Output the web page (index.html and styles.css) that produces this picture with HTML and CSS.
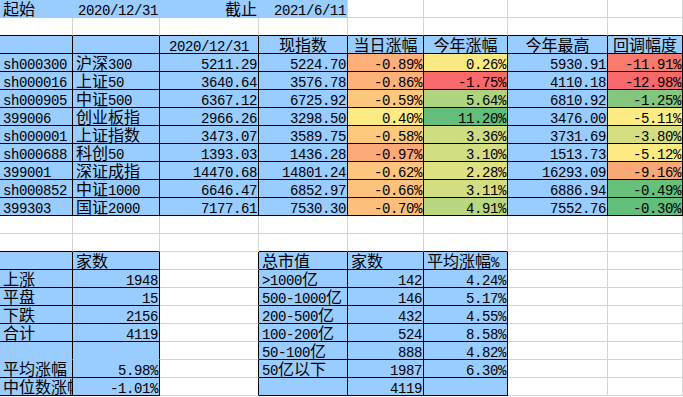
FILE: index.html
```html
<!DOCTYPE html>
<html lang="zh-CN">
<head>
<meta charset="utf-8">
<title>指数涨幅</title>
<link rel="stylesheet" href="styles.css">
</head>
<body>
<div class="sheet">
  <!-- row 1 -->
  <div class="c b x"><span class="h">起始</span></div>
  <div class="c b x r">2020/12/31</div>
  <div class="c b x r"><span class="h">截止</span></div>
  <div class="c b xb r">2021/6/11</div>
  <div class="c"></div><div class="c"></div><div class="c"></div><div class="c"></div>
  <!-- row 2 -->
  <div class="c kb"></div><div class="c kb"></div><div class="c kb"></div><div class="c kb"></div>
  <div class="c kb"></div><div class="c kb"></div><div class="c kb"></div><div class="c kb"></div>
  <!-- row 3 header -->
  <div class="c b k"></div>
  <div class="c b k"></div>
  <div class="c b k m">2020/12/31</div>
  <div class="c b k m"><span class="h">现指数</span></div>
  <div class="c b k m"><span class="h">当日涨幅</span></div>
  <div class="c b k m"><span class="h">今年涨幅</span></div>
  <div class="c b k m"><span class="h">今年最高</span></div>
  <div class="c b k m"><span class="h">回调幅度</span></div>
  <!-- data rows -->
  <div class="c b k">sh000300</div><div class="c b k"><span class="h">沪深</span>300</div>
  <div class="c b k r">5211.29</div><div class="c b k r">5224.70</div>
  <div class="c k r" style="background:#FCAF79">-0.89%</div>
  <div class="c k r" style="background:#F9E984">0.26%</div>
  <div class="c b k r">5930.91</div>
  <div class="c k r" style="background:#F97B6E">-11.91%</div>

  <div class="c b k">sh000016</div><div class="c b k"><span class="h">上证</span>50</div>
  <div class="c b k r">3640.64</div><div class="c b k r">3576.78</div>
  <div class="c k r" style="background:#FCB279">-0.86%</div>
  <div class="c k r" style="background:#F8696B">-1.75%</div>
  <div class="c b k r">4110.18</div>
  <div class="c k r" style="background:#F8696B">-12.98%</div>

  <div class="c b k">sh000905</div><div class="c b k"><span class="h">中证</span>500</div>
  <div class="c b k r">6367.12</div><div class="c b k r">6725.92</div>
  <div class="c k r" style="background:#FDC87D">-0.59%</div>
  <div class="c k r" style="background:#AFD47F">5.64%</div>
  <div class="c b k r">6810.92</div>
  <div class="c k r" style="background:#82C77D">-1.25%</div>

  <div class="c b k">399006</div><div class="c b k"><span class="h">创业板指</span></div>
  <div class="c b k r">2966.26</div><div class="c b k r">3298.50</div>
  <div class="c k r" style="background:#FCEA84">0.40%</div>
  <div class="c k r" style="background:#63BE7B">11.20%</div>
  <div class="c b k r">3476.00</div>
  <div class="c k r" style="background:#FFEB84">-5.11%</div>

  <div class="c b k">sh000001</div><div class="c b k"><span class="h">上证指数</span></div>
  <div class="c b k r">3473.07</div><div class="c b k r">3589.75</div>
  <div class="c k r" style="background:#FDC97D">-0.58%</div>
  <div class="c k r" style="background:#CFDD81">3.36%</div>
  <div class="c b k r">3731.69</div>
  <div class="c k r" style="background:#D5DF82">-3.80%</div>

  <div class="c b k">sh000688</div><div class="c b k"><span class="h">科创</span>50</div>
  <div class="c b k r">1393.03</div><div class="c b k r">1436.28</div>
  <div class="c k r" style="background:#FBA977">-0.97%</div>
  <div class="c k r" style="background:#D2DE81">3.10%</div>
  <div class="c b k r">1513.73</div>
  <div class="c k r" style="background:#FEEA84">-5.12%</div>

  <div class="c b k">399001</div><div class="c b k"><span class="h">深证成指</span></div>
  <div class="c b k r">14470.68</div><div class="c b k r">14801.24</div>
  <div class="c k r" style="background:#FDC57D">-0.62%</div>
  <div class="c k r" style="background:#DEE182">2.28%</div>
  <div class="c b k r">16293.09</div>
  <div class="c k r" style="background:#FBA877">-9.16%</div>

  <div class="c b k">sh000852</div><div class="c b k"><span class="h">中证</span>1000</div>
  <div class="c b k r">6646.47</div><div class="c b k r">6852.97</div>
  <div class="c k r" style="background:#FDC27C">-0.66%</div>
  <div class="c k r" style="background:#D2DE81">3.11%</div>
  <div class="c b k r">6886.94</div>
  <div class="c k r" style="background:#69C07B">-0.49%</div>

  <div class="c b k">399303</div><div class="c b k"><span class="h">国证</span>2000</div>
  <div class="c b k r">7177.61</div><div class="c b k r">7530.30</div>
  <div class="c k r" style="background:#FCBF7C">-0.70%</div>
  <div class="c k r" style="background:#B9D780">4.91%</div>
  <div class="c b k r">7552.76</div>
  <div class="c k r" style="background:#63BE7B">-0.30%</div>

  <!-- row 13 -->
  <div class="c"></div><div class="c"></div><div class="c"></div><div class="c"></div>
  <div class="c"></div><div class="c"></div><div class="c"></div><div class="c"></div>
  <!-- row 14 -->
  <div class="c kb"></div><div class="c kb"></div><div class="c"></div><div class="c kb"></div>
  <div class="c kb"></div><div class="c kb"></div><div class="c"></div><div class="c"></div>
  <!-- row 15 -->
  <div class="c b k"></div><div class="c b k"><span class="h">家数</span></div><div class="c kr"></div>
  <div class="c b k"><span class="h">总市值</span></div><div class="c b k"><span class="h">家数</span></div><div class="c b k"><span class="h">平均涨幅</span>%</div>
  <div class="c"></div><div class="c"></div>
  <!-- row 16 -->
  <div class="c b k"><span class="h">上涨</span></div><div class="c b k r">1948</div><div class="c kr"></div>
  <div class="c b k">&gt;1000<span class="h">亿</span></div><div class="c b k r">142</div><div class="c b k r">4.24%</div>
  <div class="c"></div><div class="c"></div>
  <!-- row 17 -->
  <div class="c b k"><span class="h">平盘</span></div><div class="c b k r">15</div><div class="c kr"></div>
  <div class="c b k">500-1000<span class="h">亿</span></div><div class="c b k r">146</div><div class="c b k r">5.17%</div>
  <div class="c"></div><div class="c"></div>
  <!-- row 18 -->
  <div class="c b k"><span class="h">下跌</span></div><div class="c b k r">2156</div><div class="c kr"></div>
  <div class="c b k">200-500<span class="h">亿</span></div><div class="c b k r">432</div><div class="c b k r">4.55%</div>
  <div class="c"></div><div class="c"></div>
  <!-- row 19 -->
  <div class="c b k"><span class="h">合计</span></div><div class="c b k r">4119</div><div class="c kr"></div>
  <div class="c b k">100-200<span class="h">亿</span></div><div class="c b k r">524</div><div class="c b k r">8.58%</div>
  <div class="c"></div><div class="c"></div>
  <!-- row 20 -->
  <div class="c b k nb"></div><div class="c b k nb"></div><div class="c kr"></div>
  <div class="c b k">50-100<span class="h">亿</span></div><div class="c b k r">888</div><div class="c b k r">4.82%</div>
  <div class="c"></div><div class="c"></div>
  <!-- row 21 -->
  <div class="c b k"><span class="h">平均涨幅</span></div><div class="c b k r">5.98%</div><div class="c kr"></div>
  <div class="c b k">50<span class="h">亿以下</span></div><div class="c b k r">1987</div><div class="c b k r">6.30%</div>
  <div class="c"></div><div class="c"></div>
  <!-- row 22 -->
  <div class="c b k"><span class="h">中位数涨幅</span></div><div class="c b k r">-1.01%</div><div class="c kr"></div>
  <div class="c b k"></div><div class="c b k r">4119</div><div class="c b k"></div>
  <div class="c"></div><div class="c"></div>
</div>
</body>
</html>
```
FILE: styles.css
```css
html, body {
  margin: 0;
  padding: 0;
  background: #ffffff;
  overflow: hidden;
}

.sheet {
  display: grid;
  grid-template-columns: 73px 87px 99px 89px 76px 84px 100px 75px;
  grid-auto-rows: 18px;
  width: 683px;
  font-family: "Liberation Mono", "Noto Sans CJK SC", monospace;
  font-size: 14px;
  letter-spacing: -0.4px;
  color: #000000;
}

.c {
  box-sizing: border-box;
  border-right: 1px solid #d4d4d4;
  border-bottom: 1px solid #d4d4d4;
  padding: 2px 1px 0 3px;
  line-height: 18px;
  height: 18px;
  white-space: nowrap;
  overflow: hidden;
  text-align: left;
}

.h {
  font-family: "Noto Sans CJK SC", sans-serif;
  font-size: 16px;
  letter-spacing: 0;
  line-height: 0;
}

.b { background: #99ccff; }

.x { border-right-color: transparent; border-bottom-color: transparent; }
.xb { border-bottom-color: transparent; }

.k { border-right-color: #000000; border-bottom-color: #000000; }
.kb { border-bottom-color: #000000; }
.kr { border-right-color: #000000; }
.nb { border-bottom-color: transparent; }

.r { text-align: right; }
.m { text-align: center; padding-left: 1px; }
```
